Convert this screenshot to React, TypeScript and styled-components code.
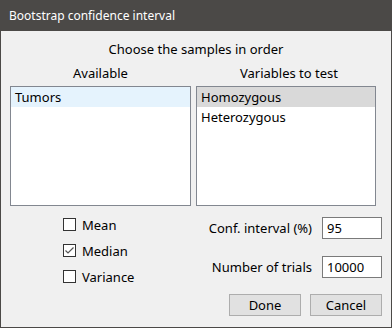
import React from "react";
import styled, { createGlobalStyle } from "styled-components";

const Global = createGlobalStyle`
  html, body { margin: 0; padding: 0; background: #f0f0f0; }
  * { box-sizing: border-box; }
`;

const font = `"Noto Sans", "Open Sans", sans-serif`;

const Window = styled.div`
  width: 392px;
  height: 328px;
  background: #f0f0f0;
  border: 1px solid #4b4947;
  border-top: none;
  display: flex;
  flex-direction: column;
  font-family: ${font};
  font-size: 13px;
  color: #000;
`;

const TitleBar = styled.div`
  height: 31px;
  margin: 0 -1px;
  background: #4b4947;
  color: #fff;
  display: flex;
  align-items: center;
  padding-left: 9px;
  font-size: 12px;
`;

const Body = styled.div`
  flex: 1;
  display: flex;
  flex-direction: column;
  padding: 8px 9px 0 9px;
`;

const Heading = styled.div`
  text-align: center;
  height: 20px;
  line-height: 20px;
`;

const Lists = styled.div`
  display: grid;
  grid-template-columns: 181px 180px;
  column-gap: 5px;
  margin-top: 4px;
`;

const ListColumn = styled.div`
  display: flex;
  flex-direction: column;
`;

const ColLabel = styled.div<{ $shift?: number }>`
  text-align: center;
  height: 20px;
  line-height: 20px;
  margin-bottom: 3px;
  padding-left: ${(p) => p.$shift ?? 0}px;
`;

const ListBox = styled.div`
  height: 120px;
  background: #fff;
  border: 1px solid #828790;
  display: flex;
  flex-direction: column;
`;

const ListItem = styled.div<{ $sel?: "blue" | "gray" }>`
  height: 20px;
  line-height: 20px;
  padding-left: 4px;
  background: ${(p) =>
    p.$sel === "blue" ? "#e5f3fd" : p.$sel === "gray" ? "#d9d9d9" : "transparent"};
`;

const Lower = styled.div`
  display: grid;
  grid-template-columns: 190px 1fr;
  margin-top: 11px;
`;

const Checks = styled.div`
  display: flex;
  flex-direction: column;
  gap: 13px;
  padding-left: 53px;
  padding-top: 1px;
`;

const CheckRow = styled.label`
  display: flex;
  align-items: center;
  gap: 6px;
  height: 13px;
`;

const Box = styled.span`
  width: 13px;
  height: 13px;
  border: 1px solid #333;
  background: #fff;
  display: inline-flex;
  align-items: center;
  justify-content: center;
`;

const Fields = styled.div`
  display: flex;
  flex-direction: column;
  align-items: flex-end;
`;

const FieldRow = styled.div<{ $mt?: number }>`
  display: flex;
  align-items: center;
  gap: 10px;
  margin-top: ${(p) => p.$mt ?? 0}px;
`;

const Input = styled.div`
  width: 60px;
  height: 22px;
  background: #fff;
  border: 1px solid #7a7a7a;
  padding-left: 4px;
  line-height: 20px;
`;

const Buttons = styled.div`
  display: flex;
  gap: 9px;
  margin-top: 16px;
`;

const Button = styled.div`
  width: 72px;
  height: 22px;
  background: #e1e1e1;
  border: 1px solid #adadad;
  display: flex;
  align-items: center;
  justify-content: center;
`;

const Check = () => (
  <svg width="11" height="11" viewBox="0 0 11 11">
    <path d="M1.5 5.5 L4 8 L9.5 2.5" fill="none" stroke="#555" strokeWidth="1.2" />
  </svg>
);

export default function App() {
  return (
    <>
      <Global />
      <Window>
        <TitleBar>Bootstrap confidence interval</TitleBar>
        <Body>
          <Heading>Choose the samples in order</Heading>
          <Lists>
            <ListColumn>
              <ColLabel>Available</ColLabel>
              <ListBox>
                <ListItem $sel="blue">Tumors</ListItem>
              </ListBox>
            </ListColumn>
            <ListColumn>
              <ColLabel $shift={6}>Variables to test</ColLabel>
              <ListBox>
                <ListItem $sel="gray">Homozygous</ListItem>
                <ListItem>Heterozygous</ListItem>
              </ListBox>
            </ListColumn>
          </Lists>
          <Lower>
            <Checks>
              <CheckRow>
                <Box />
                Mean
              </CheckRow>
              <CheckRow>
                <Box>
                  <Check />
                </Box>
                Median
              </CheckRow>
              <CheckRow>
                <Box />
                Variance
              </CheckRow>
            </Checks>
            <Fields>
              <FieldRow>
                Conf. interval (%)
                <Input>95</Input>
              </FieldRow>
              <FieldRow $mt={17}>
                Number of trials
                <Input>10000</Input>
              </FieldRow>
              <Buttons>
                <Button>Done</Button>
                <Button>Cancel</Button>
              </Buttons>
            </Fields>
          </Lower>
        </Body>
      </Window>
    </>
  );
}
